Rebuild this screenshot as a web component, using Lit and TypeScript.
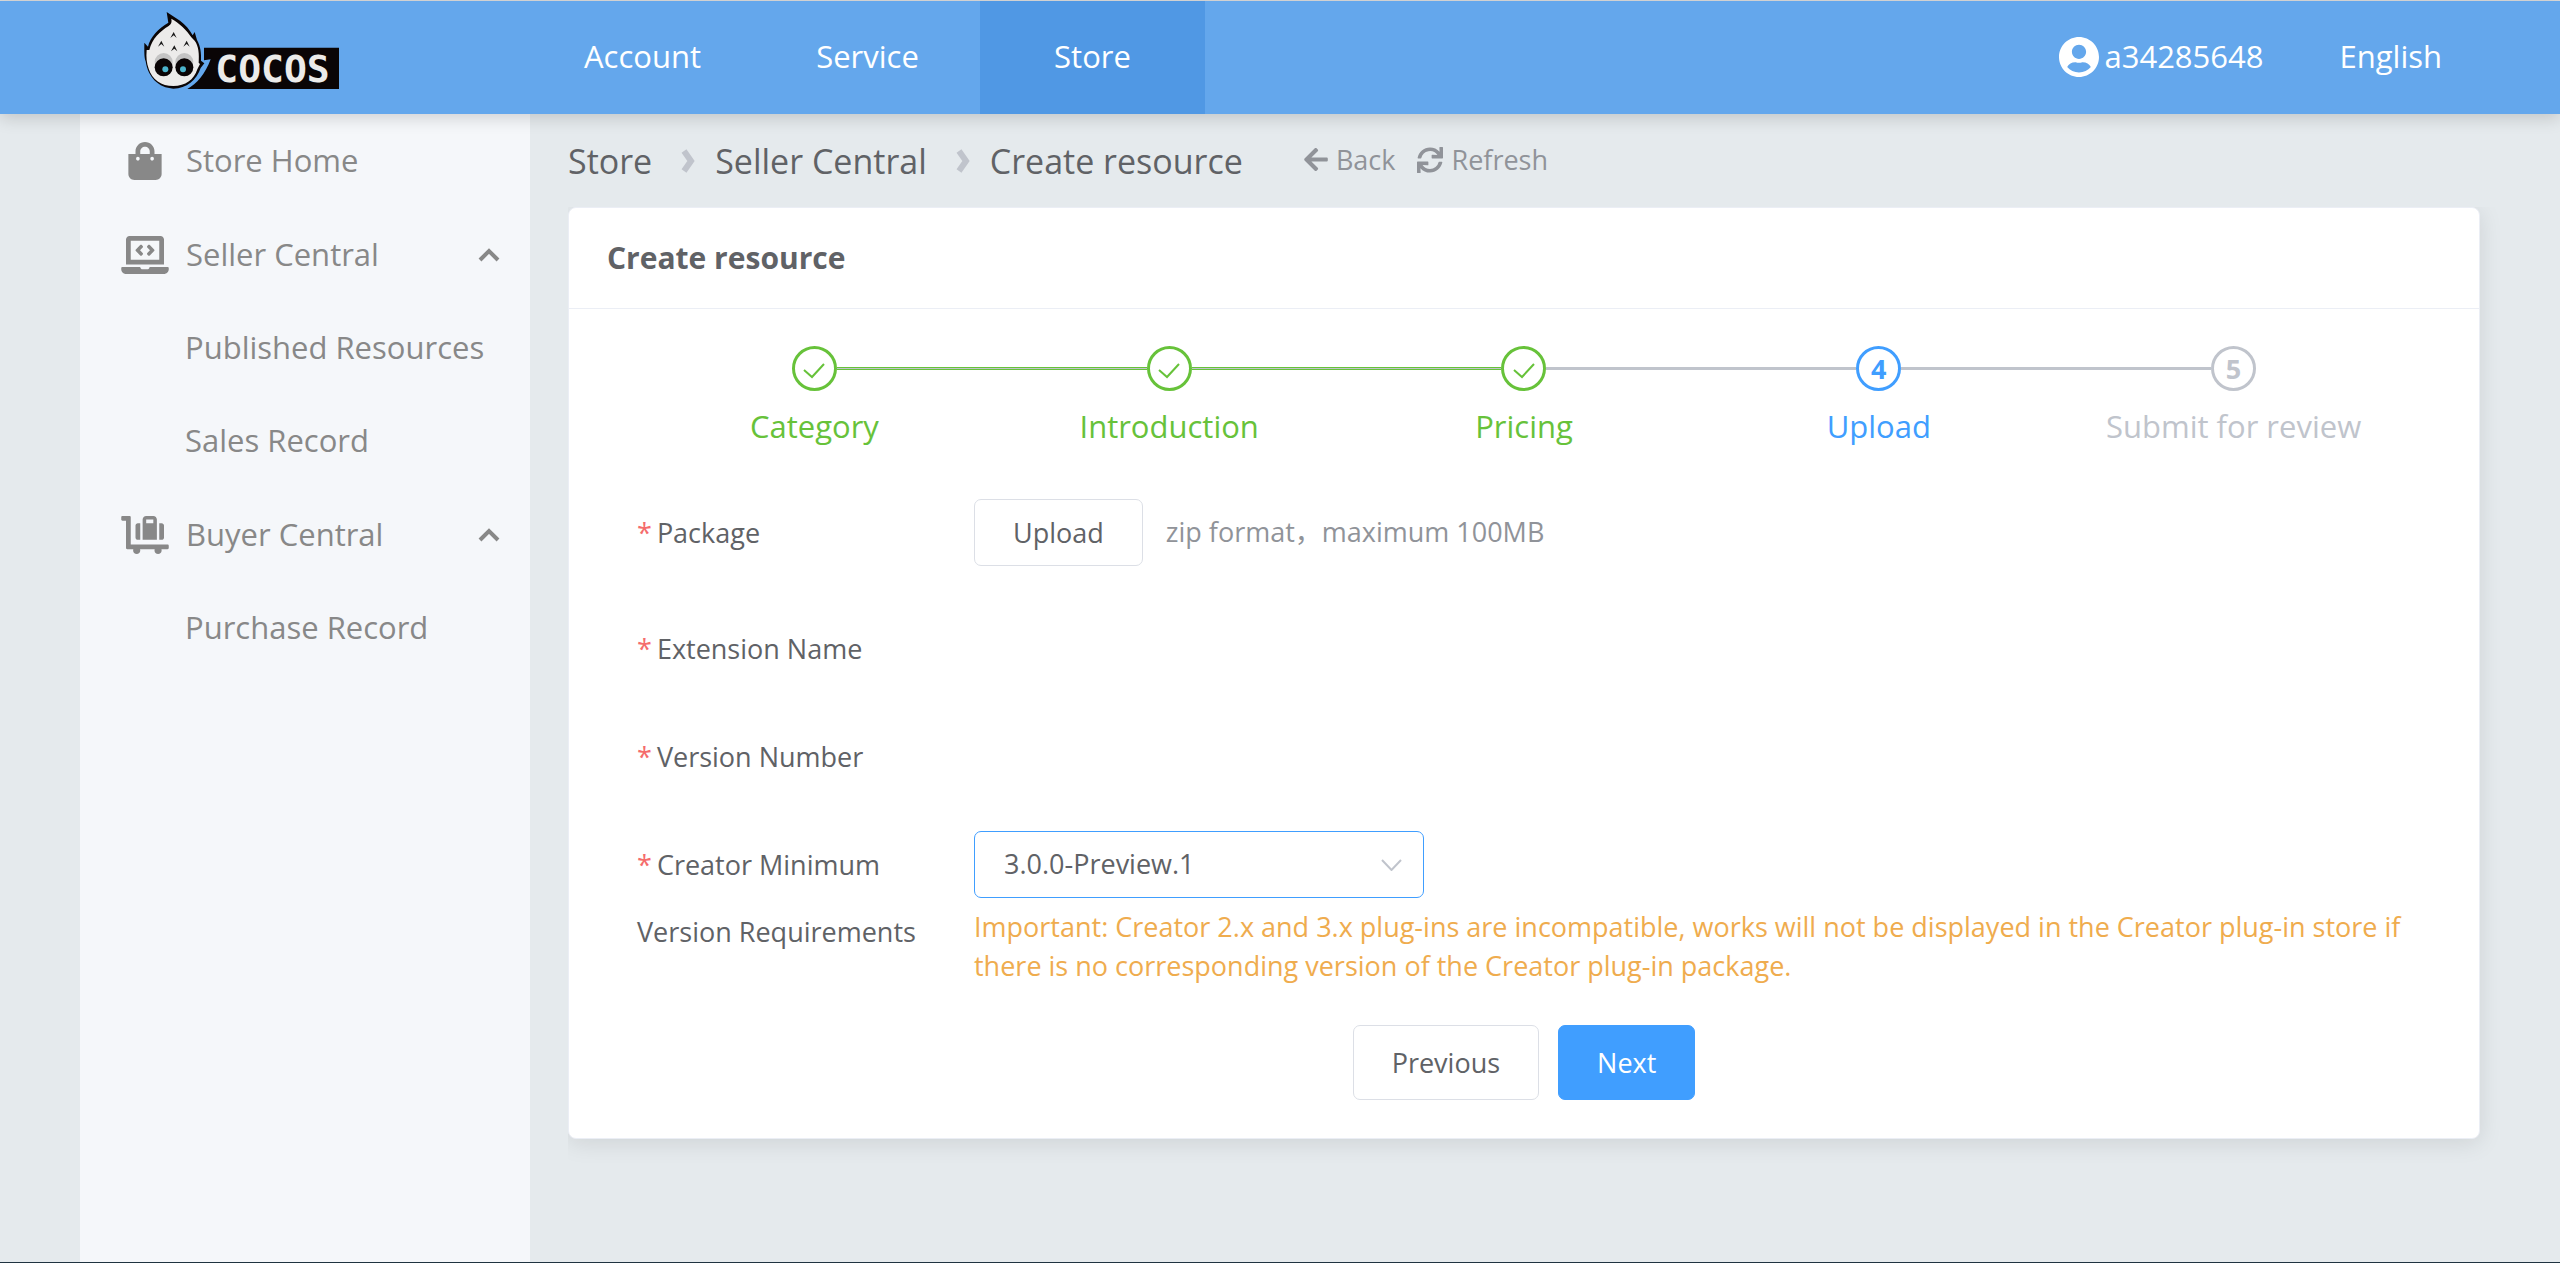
import { LitElement, html, svg, css } from "lit";
import { customElement, property, state } from "lit/decorators.js";
import { classMap } from "lit/directives/class-map.js";

interface Glyph {
  box: string;
  path: string;
}

const GLYPHS: Record<string, Glyph> = {
  bag: {
    box: "0 0 448 512",
    path: "M352 160v-32C352 57.42 294.579 0 224 0 153.42 0 96 57.42 96 128v32H0v272c0 44.183 35.817 80 80 80h288c44.183 0 80-35.817 80-80V160h-96zm-192-32c0-35.29 28.71-64 64-64s64 28.71 64 64v32H160v-32zm160 120c-13.255 0-24-10.745-24-24s10.745-24 24-24 24 10.745 24 24-10.745 24-24 24zm-192 0c-13.255 0-24-10.745-24-24s10.745-24 24-24 24 10.745 24 24-10.745 24-24 24z",
  },
  laptop: {
    box: "0 0 640 512",
    path: "M255.03 261.65c6.25 6.25 16.38 6.25 22.63 0l11.31-11.31c6.25-6.25 6.25-16.38 0-22.63L253.25 192l35.71-35.72c6.25-6.25 6.25-16.38 0-22.63l-11.31-11.31c-6.25-6.25-16.38-6.25-22.63 0l-58.34 58.34c-6.25 6.25-6.25 16.38 0 22.63l58.35 58.34zm96.01-11.3l11.31 11.31c6.25 6.25 16.38 6.25 22.63 0l58.34-58.34c6.25-6.25 6.25-16.38 0-22.63l-58.34-58.34c-6.25-6.25-16.38-6.25-22.63 0l-11.31 11.31c-6.25 6.25-6.25 16.38 0 22.63L386.75 192l-35.71 35.72c-6.25 6.25-6.25 16.38 0 22.63zM624 416H381.54c-.74 19.81-14.71 32-32.74 32H288c-18.69 0-33.02-17.47-32.77-32H16c-8.8 0-16 7.2-16 16v16c0 35.2 28.8 64 64 64h512c35.2 0 64-28.8 64-64v-16c0-8.8-7.2-16-16-16zM576 48c0-26.4-21.6-48-48-48H112C85.6 0 64 21.6 64 48v336h512V48zm-64 272H128V64h384v256z",
  },
  cart: {
    box: "0 0 640 512",
    path: "M224 320h32V96h-32c-17.67 0-32 14.33-32 32v160c0 17.67 14.33 32 32 32zm352-32V128c0-17.67-14.33-32-32-32h-32v224h32c17.67 0 32-14.33 32-32zm48 96H128V16c0-8.84-7.16-16-16-16H16C7.16 0 0 7.16 0 16v32c0 8.84 7.16 16 16 16h48v368c0 8.84 7.16 16 16 16h82.94c-1.79 5.03-2.94 10.36-2.94 16 0 26.51 21.49 48 48 48s48-21.49 48-48c0-5.64-1.15-10.97-2.94-16h197.88c-1.79 5.03-2.94 10.36-2.94 16 0 26.51 21.49 48 48 48s48-21.49 48-48c0-5.64-1.15-10.97-2.94-16H624c8.84 0 16-7.16 16-16v-32c0-8.84-7.16-16-16-16zM480 96V48c0-26.51-21.49-48-48-48h-96c-26.51 0-48 21.49-48 48v272h192V96zm-48 0h-96V48h96v48z",
  },
  user: {
    box: "0 8 496 496",
    path: "M248 8C111 8 0 119 0 256s111 248 248 248 248-111 248-248S385 8 248 8zm0 96c48.6 0 88 39.4 88 88s-39.4 88-88 88-88-39.4-88-88 39.4-88 88-88zm0 344c-58.7 0-111.3-26.6-146.5-68.2 18.8-35.4 55.6-59.8 98.5-59.8 2.4 0 4.8.4 7.1 1.1 13 4.2 26.6 6.9 40.9 6.9 14.3 0 28-2.7 40.9-6.9 2.3-.7 4.7-1.1 7.1-1.1 42.9 0 79.7 24.4 98.5 59.8C359.3 421.4 306.7 448 248 448z",
  },
  back: {
    box: "0 0 448 512",
    path: "M257.5 445.1l-22.2 22.2c-9.4 9.4-24.6 9.4-33.9 0L7 273c-9.4-9.4-9.4-24.6 0-33.9L201.4 44.7c9.4-9.4 24.6-9.4 33.9 0l22.2 22.2c9.5 9.5 9.3 25-.4 34.3L136.6 216H424c13.3 0 24 10.7 24 24v32c0 13.3-10.7 24-24 24H136.6l120.5 114.8c9.8 9.3 10 24.8.4 34.3z",
  },
  refresh: {
    box: "0 0 512 512",
    path: "M440.65 12.57l4 82.77A247.16 247.16 0 0 0 255.83 8C134.73 8 33.91 94.92 12.29 209.82A12 12 0 0 0 24.09 224h49.05a12 12 0 0 0 11.67-9.26 175.91 175.91 0 0 1 317-56.94l-101.46-4.86a12 12 0 0 0-12.57 12v47.41a12 12 0 0 0 12 12H500a12 12 0 0 0 12-12V12a12 12 0 0 0-12-12h-47.37a12 12 0 0 0-11.98 12.57zM255.83 432a175.61 175.61 0 0 1-146-77.8l101.8 4.87a12 12 0 0 0 12.57-12v-47.4a12 12 0 0 0-12-12H12a12 12 0 0 0-12 12V500a12 12 0 0 0 12 12h47.35a12 12 0 0 0 12-12.6l-4.15-82.57A247.17 247.17 0 0 0 255.83 504c121.11 0 221.93-86.92 243.55-201.82a12 12 0 0 0-11.8-14.18h-49.05a12 12 0 0 0-11.67 9.26A175.86 175.86 0 0 1 255.83 432z",
  },
};

const glyph = (name: string, cls: string) => html`
  <svg class=${cls} viewBox=${GLYPHS[name].box} fill="currentColor" aria-hidden="true">
    <path d=${GLYPHS[name].path}></path>
  </svg>
`;

@customElement("cocos-logo")
class CocosLogo extends LitElement {
  static styles = css`
    :host {
      display: block;
    }
    .mark {
      display: block;
      width: 195px;
      height: 87px;
      overflow: visible;
    }
    .word {
      font: 700 114px "DejaVu Sans Mono", monospace;
      fill: #ecebea;
    }
  `;

  private tuft = (x: number, y: number) =>
    svg`<path d="M${x - 10} ${y + 18}L${x} ${y}L${x + 9} ${y + 18}L${x} ${y + 10}z" fill="#1a1a1a"></path>`;

  private eye = (x: number, glint: number) => svg`
    <circle cx=${x} cy="186" r="27" fill="#c4c4c4"></circle>
    <circle cx=${x} cy="202" r="27" fill="#0a0506"></circle>
    <circle cx=${glint} cy="208" r="9" fill="#4bb3cc"></circle>
  `;

  render() {
    return html`
      <svg class="mark" viewBox="42 36 585 261" role="img" aria-label="Cocos">
        <path d="M222 143H627V267H172C200 252 226 222 242 178L222 181z" fill="#0a0506"></path>
        <path
          d="M110 36L150 62C166 74 180 90 188 106L194 96L201 120C212 140 214 160 213 182L223 190L212 204C200 240 170 266 130 266C86 264 54 232 47 184C42 172 43 150 43 128L54 140C60 112 86 84 115 68z"
          fill="#0a0506"
        ></path>
        <path
          d="M124 56C126 66 124 72 116 78C90 94 66 116 58 150L50 150C48 172 50 190 56 206C66 238 94 258 130 258C166 258 192 240 202 208L210 192L206 188C208 162 206 138 194 122L184 112C170 90 148 70 124 56z"
          fill="#ecebea"
        ></path>
        ${this.tuft(131, 96)} ${this.tuft(94, 122)} ${this.tuft(170, 122)} ${this.tuft(133, 136)}
        ${this.eye(101, 106)} ${this.eye(163, 159)}
        <text class="word" x="256" y="246">COCOS</text>
      </svg>
    `;
  }
}

@customElement("step-bar")
class StepBar extends LitElement {
  static styles = css`
    .steps {
      display: grid;
      grid-auto-flow: column;
      grid-auto-columns: 1fr;
      list-style: none;
      margin: 0;
      padding: 0;
    }
    .step {
      display: flex;
      flex-direction: column;
      align-items: center;
      color: #c0c4cc;
    }
    .done {
      color: #67c23a;
    }
    .current {
      color: #409eff;
    }
    .rail {
      display: grid;
      grid-template-columns: 1fr 45px 1fr;
      align-items: center;
      align-self: stretch;
    }
    .line {
      height: 3px;
      background: #c0c4cc;
    }
    .line.green {
      height: 1px;
      border: solid #67c23a;
      border-width: 1px 0;
    }
    .line.none {
      visibility: hidden;
    }
    .circle {
      display: flex;
      align-items: center;
      justify-content: center;
      box-sizing: border-box;
      width: 45px;
      height: 45px;
      border: 3px solid currentColor;
      border-radius: 50%;
      font-size: 27px;
      font-weight: 700;
      line-height: 39px;
    }
    .tick {
      width: 22px;
      height: 16px;
      padding-top: 5px;
    }
    .title {
      font-size: 31px;
      line-height: 70px;
      white-space: nowrap;
    }
  `;

  @property({ attribute: false }) steps: string[] = [];
  @property({ type: Number }) active = 0;

  private line(shown: boolean, done: boolean) {
    return html`<span class=${classMap({ line: true, green: done, none: !shown })}></span>`;
  }

  render() {
    const last = this.steps.length - 1;
    return html`
      <ol class="steps">
        ${this.steps.map(
          (title, i) => html`
            <li class=${classMap({ step: true, done: i < this.active, current: i === this.active })}>
              <div class="rail">
                ${this.line(i > 0, i < this.active)}
                <span class="circle">
                  ${i < this.active
                    ? html`<svg class="tick" viewBox="0 0 22 16" fill="none" stroke="currentColor" stroke-width="2">
                        <path d="M1 7L9 14L21 1"></path>
                      </svg>`
                    : i + 1}
                </span>
                ${this.line(i < last, i + 1 < this.active)}
              </div>
              <span class="title">${title}</span>
            </li>
          `
        )}
      </ol>
    `;
  }
}

@customElement("app-root")
class AppRoot extends LitElement {
  static styles = css`
    :host {
      display: flex;
      flex-direction: column;
      box-sizing: border-box;
      min-height: 100vh;
      border-top: 1px solid #dcdcdc;
      border-bottom: 1px solid #1f3340;
      background: #e5eaed;
      color: #606266;
      font-family: "Open Sans", "Noto Sans", "Noto Sans CJK SC", sans-serif;
      font-size: 27px;
    }
    a {
      color: inherit;
      text-decoration: none;
    }
    button,
    select {
      font: inherit;
      color: inherit;
      margin: 0;
      cursor: pointer;
    }
    .topbar {
      z-index: 1;
      display: flex;
      height: 113px;
      padding-right: 80px;
      background: #64a7ec;
      color: #fff;
      font-size: 31px;
      line-height: 111px;
      box-shadow: 0 4px 16px rgba(0, 0, 0, 0.16);
    }
    .brand {
      box-sizing: border-box;
      width: 530px;
      padding: 11px 0 0 144px;
    }
    .nav {
      display: flex;
      flex: 1;
    }
    .tab {
      width: 225px;
      text-align: center;
    }
    .tab.active {
      background: #5098e4;
    }
    .tool {
      display: flex;
      align-items: center;
      gap: 5px;
      padding: 0 38px 2px;
    }
    .avatar {
      width: 40px;
      height: 40px;
    }
    .page {
      display: flex;
      flex: 1;
      padding: 0 80px;
      gap: 38px;
    }
    .side {
      box-sizing: border-box;
      width: 450px;
      flex: none;
      background: #f5f7fa;
      color: #888;
      font-size: 31px;
    }
    .entry {
      display: flex;
      align-items: center;
      box-sizing: border-box;
      width: 100%;
      height: 94px;
      padding: 0 30px 0 41px;
      border: 0;
      background: none;
      gap: 17px;
      text-align: left;
    }
    .entry .name {
      flex: 1;
      padding-bottom: 3px;
    }
    .icon {
      width: 48px;
      height: 38px;
    }
    .fold {
      width: 22px;
      height: 14px;
    }
    .sub {
      display: block;
      padding: 0 0 2px 105px;
      line-height: 91px;
    }
    .main {
      flex: 1;
      min-width: 0;
    }
    .crumbs {
      display: flex;
      align-items: center;
      height: 93px;
      font-size: 34px;
    }
    .sep {
      width: 16px;
      height: 24px;
      padding: 0 19px 0 28px;
      color: #c0c4cc;
    }
    .act {
      display: flex;
      align-items: center;
      gap: 8px;
      padding: 0 0 2px;
      border: 0;
      background: none;
      color: #909399;
      font-size: 27px;
    }
    .acts {
      display: flex;
      gap: 22px;
      padding-left: 61px;
    }
    .act .back {
      width: 24px;
      height: 27px;
    }
    .act .refresh {
      width: 26px;
      height: 26px;
    }
    .card {
      border: 1px solid #ebeef5;
      border-radius: 8px;
      background: #fff;
      box-shadow: 0 4px 23px rgba(0, 0, 0, 0.1);
      clip-path: inset(0 -40px -40px 0);
    }
    .heading {
      margin: 0;
      padding: 0 38px;
      border-bottom: 1px solid #ebeef5;
      font-size: 30px;
      font-weight: 700;
      line-height: 100px;
    }
    .body {
      padding: 37px 68px 38px;
    }
    .form {
      display: grid;
      grid-template-columns: 337px 1fr;
      row-gap: 41px;
      padding: 38px 0 40px;
    }
    .label {
      max-width: 310px;
      line-height: 67px;
    }
    .first {
      padding-bottom: 8px;
    }
    .required::before {
      content: "*";
      padding-right: 5px;
      color: #f56c6c;
    }
    .pick {
      display: flex;
      align-items: center;
      gap: 23px;
      height: 67px;
    }
    .hint {
      height: 67px;
      color: #909399;
      line-height: 65px;
    }
    .button {
      padding: 0 38px;
      border: 1px solid #dcdfe6;
      border-radius: 7px;
      background: #fff;
      line-height: 65px;
    }
    .large {
      line-height: 73px;
    }
    .primary {
      border-color: #409eff;
      background: #409eff;
      color: #fff;
    }
    .drop {
      position: relative;
      display: block;
      width: 450px;
      height: 67px;
    }
    .select {
      box-sizing: border-box;
      width: 100%;
      height: 100%;
      padding: 0 60px 2px 29px;
      border: 1px solid #409eff;
      border-radius: 7px;
      outline: none;
      background: #fff;
      appearance: none;
    }
    .caret {
      position: absolute;
      right: 22px;
      top: 28px;
      width: 21px;
      height: 12px;
      color: #c0c4cc;
      pointer-events: none;
    }
    .warning {
      margin: 9px 0 0;
      color: #efac4e;
      line-height: 39px;
    }
    .footer {
      display: flex;
      justify-content: center;
      gap: 19px;
    }
  `;

  @state() private open = { seller: true, buyer: true };

  private toggle(key: "seller" | "buyer") {
    this.open = { ...this.open, [key]: !this.open[key] };
  }

  private group(key: "seller" | "buyer", icon: string, name: string, links: string[]) {
    const open = this.open[key];
    return html`
      <button class="entry" aria-expanded=${open} @click=${() => this.toggle(key)}>
        ${glyph(icon, "icon")}
        <span class="name">${name}</span>
        <svg class="fold" viewBox="0 0 22 14" fill="none" stroke="currentColor" stroke-width="4" aria-hidden="true">
          <path d=${open ? "M2 12L11 3L20 12" : "M2 2L11 11L20 2"}></path>
        </svg>
      </button>
      ${open ? links.map((link) => html`<a class="sub" href="#">${link}</a>`) : null}
    `;
  }

  private separator() {
    return html`
      <svg class="sep" viewBox="0 0 16 24" fill="none" stroke="currentColor" stroke-width="6" aria-hidden="true">
        <path d="M4 2L11 12L4 22"></path>
      </svg>
    `;
  }

  render() {
    return html`
      <header class="topbar">
        <a class="brand" href="#"><cocos-logo></cocos-logo></a>
        <nav class="nav">
          <a class="tab" href="#">Account</a>
          <a class="tab" href="#">Service</a>
          <a class="tab active" href="#">Store</a>
        </nav>
        <a class="tool" href="#">${glyph("user", "avatar")}<span>a34285648</span></a>
        <a class="tool" href="#">English</a>
      </header>
      <div class="page">
        <nav class="side">
          <a class="entry" href="#">${glyph("bag", "icon")}<span class="name">Store Home</span></a>
          ${this.group("seller", "laptop", "Seller Central", ["Published Resources", "Sales Record"])}
          ${this.group("buyer", "cart", "Buyer Central", ["Purchase Record"])}
        </nav>
        <main class="main">
          <div class="crumbs">
            <a href="#">Store</a>${this.separator()}<a href="#">Seller Central</a>${this.separator()}<span
              >Create resource</span
            >
            <div class="acts">
              <button class="act">${glyph("back", "back")}Back</button>
              <button class="act">${glyph("refresh", "refresh")}Refresh</button>
            </div>
          </div>
          <section class="card">
            <h1 class="heading">Create resource</h1>
            <div class="body">
              <step-bar
                .steps=${["Category", "Introduction", "Pricing", "Upload", "Submit for review"]}
                .active=${3}
              ></step-bar>
              <div class="form">
                <span class="label required first">Package</span>
                <div class="pick">
                  <button class="button">Upload</button>
                  <span class="hint">zip format，maximum 100MB</span>
                </div>
                <span class="label required">Extension Name</span>
                <span></span>
                <span class="label required">Version Number</span>
                <span></span>
                <label class="label required" for="minimum">Creator Minimum Version Requirements</label>
                <div>
                  <span class="drop">
                    <select class="select" id="minimum">
                      <option>3.0.0-Preview.1</option>
                    </select>
                    <svg class="caret" viewBox="0 0 21 12" fill="none" stroke="currentColor" stroke-width="2">
                      <path d="M1 1L10.5 11L20 1"></path>
                    </svg>
                  </span>
                  <p class="warning">
                    Important: Creator 2.x and 3.x plug-ins are incompatible, works will not be displayed in the Creator
                    plug-in store if there is no corresponding version of the Creator plug-in package.
                  </p>
                </div>
              </div>
              <div class="footer">
                <button class="button large">Previous</button>
                <button class="button large primary">Next</button>
              </div>
            </div>
          </section>
        </main>
      </div>
    `;
  }
}
